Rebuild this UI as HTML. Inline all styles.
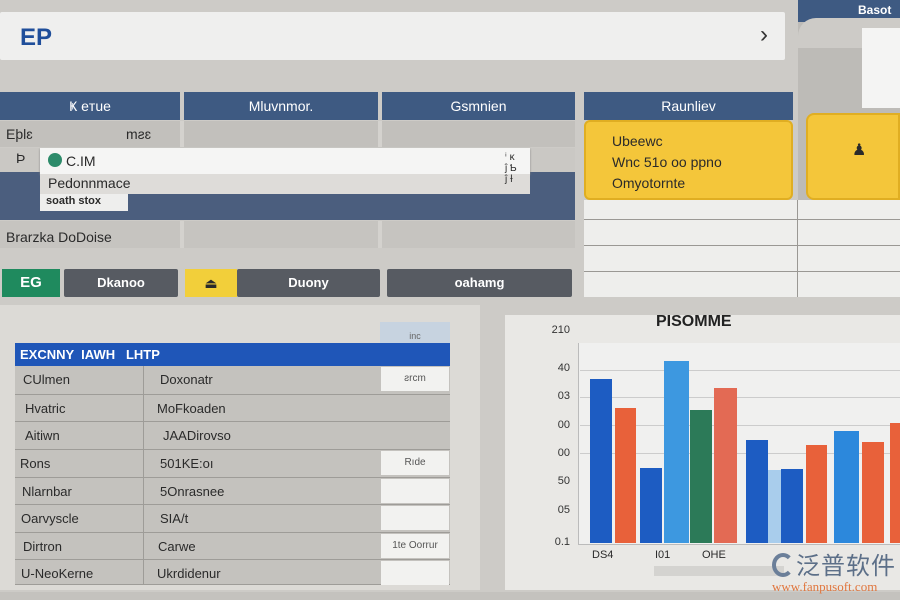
<!DOCTYPE html>
<html><head><meta charset="utf-8"><style>
*{margin:0;padding:0;box-sizing:border-box}
body{width:900px;height:600px;overflow:hidden;background:#cdcbc7;font-family:"Liberation Sans","Noto Sans CJK SC",sans-serif;position:relative;color:#2a2a2a}
div{position:absolute}
.nav{background:#3e5a82;color:#fff;font-size:14px;text-align:center;line-height:28px}
.cell{font-size:14px;color:#2a2a2a}
.btn{background:#575b62;color:#fff;font-size:13px;font-weight:bold;text-align:center;line-height:28px;border-radius:2px}
.r{height:27px;border-top:1px solid #9e9c98;width:435px;left:15px;font-size:13px;line-height:27px}
.r span{position:absolute}
.w{position:absolute;left:366px;width:68px;height:24px;top:1px;background:#f2f2f0;font-size:10px;text-align:center;line-height:24px;color:#555}
.bar{bottom:57px}
.yl{left:540px;font-size:11px;width:30px;text-align:right;color:#333}
</style></head><body>
<div style="left:0;top:592px;width:900px;height:8px;background:#c4c2be"></div>
<!-- top bar -->
<div style="left:0;top:12px;width:785px;height:48px;background:#efefee;border-radius:2px"></div>
<div style="left:20px;top:24px;font-size:24px;font-weight:bold;color:#1f4e9a">EP</div>
<div style="left:760px;top:21px;font-size:24px;color:#333">&rsaquo;</div>
<!-- right top panel -->
<div style="left:798px;top:0;width:102px;height:210px;background:#bdbbb7"></div>
<div style="left:798px;top:0;width:102px;height:22px;background:#3e5a82"></div>
<div style="left:798px;top:18px;width:102px;height:30px;background:#cdcbc7;border-radius:18px 0 0 0"></div>
<div style="left:858px;top:3px;font-size:12px;font-weight:bold;color:#fff">Basot</div>
<div style="left:862px;top:28px;width:38px;height:80px;background:#f4f4f3"></div>
<!-- header row -->
<div class="nav" style="left:0;top:92px;width:180px;height:28px">Ҝ eтue</div>
<div class="nav" style="left:184px;top:92px;width:194px;height:28px">Mluvnmor.</div>
<div class="nav" style="left:382px;top:92px;width:193px;height:28px">Gsmnien</div>
<div class="nav" style="left:584px;top:92px;width:209px;height:28px">Raunliev</div>
<!-- rows -->
<div style="left:0;top:121px;width:575px;height:26px;background:#c2c0bc"></div>
<div style="left:180px;top:121px;width:4px;height:26px;background:#d4d2ce"></div>
<div style="left:378px;top:121px;width:4px;height:26px;background:#d4d2ce"></div>
<div class="cell" style="left:6px;top:126px">Eþlɛ</div>
<div class="cell" style="left:126px;top:126px">mƨɛ</div>
<div style="left:0;top:148px;width:575px;height:24px;background:#cac8c4"></div>
<div class="cell" style="left:16px;top:150px">Þ</div>
<div style="left:0;top:172px;width:575px;height:48px;background:#4b5e7e"></div>
<div style="left:0;top:221px;width:575px;height:27px;background:#c6c4c0"></div>
<div style="left:180px;top:221px;width:4px;height:27px;background:#d4d2ce"></div>
<div style="left:378px;top:221px;width:4px;height:27px;background:#d4d2ce"></div>
<div class="cell" style="left:6px;top:229px;font-size:14px">Brarzka DoDoise</div>
<!-- dropdown -->
<div style="left:40px;top:148px;width:490px;height:26px;background:#f5f5f4;box-shadow:0 1px 2px #888"></div>
<div style="left:48px;top:153px;width:14px;height:14px;border-radius:50%;background:#2d8b6a"></div>
<div class="cell" style="left:66px;top:153px;font-size:14px">C.IM</div>
<div style="left:40px;top:174px;width:490px;height:20px;background:#dedcd9"></div>
<div class="cell" style="left:48px;top:175px;font-size:14px">Pedonnmace</div>
<div style="left:40px;top:194px;width:88px;height:17px;background:#eeeeed"></div>
<div class="cell" style="left:46px;top:195px;font-size:11px;font-weight:bold">soath stox</div>
<div class="cell" style="left:505px;top:152px;font-size:10px">ⁱ ĸ<br>ĵ Ƅ<br>ĵ Ɨ</div>
<!-- yellow cards -->
<div style="left:584px;top:120px;width:209px;height:80px;background:#f4c63a;border-radius:6px;border:2px solid #e0ae22"></div>
<div class="cell" style="left:612px;top:131px;font-size:14px;line-height:21px">Ubeewc<br>Wnc 51o oo ppno<br>Omyotornte</div>
<div style="left:806px;top:113px;width:94px;height:87px;background:#f4c63a;border-radius:8px 0 0 8px;border:2px solid #e0ae22"></div>
<div class="cell" style="left:852px;top:140px;font-size:16px">♟</div>
<!-- right table -->
<div style="left:584px;top:200px;width:316px;height:97px;background:#eeeeec"></div>
<div style="left:584px;top:219px;width:316px;height:1px;background:#9a9894"></div>
<div style="left:584px;top:245px;width:316px;height:1px;background:#9a9894"></div>
<div style="left:584px;top:271px;width:316px;height:1px;background:#9a9894"></div>
<div style="left:797px;top:200px;width:1px;height:97px;background:#9a9894"></div>
<!-- buttons -->
<div style="left:2px;top:269px;width:58px;height:28px;background:#1f8a5e;color:#fff;font-weight:bold;font-size:15px;text-align:center;line-height:28px">EG</div>
<div class="btn" style="left:64px;top:269px;width:114px">Dkanoo</div>
<div style="left:185px;top:269px;width:52px;height:28px;background:#f2cf3a;text-align:center;line-height:28px;font-size:14px">⏏</div>
<div class="btn" style="left:237px;top:269px;width:143px">Duony</div>
<div class="btn" style="left:387px;top:269px;width:185px">oahamg</div>
<!-- lower left panel -->
<div style="left:0;top:305px;width:480px;height:285px;background:#dcdad6"></div>
<div style="left:380px;top:322px;width:70px;height:22px;background:#c7d3e0;font-size:9px;text-align:center;line-height:28px;color:#666">inc</div>
<div style="left:15px;top:343px;width:435px;height:23px;background:#1f56b8;color:#fff;font-weight:bold;font-size:13px;line-height:23px;padding-left:5px">EXCNNY &nbsp;IAWH &nbsp; LHTP</div>
<div style="left:15px;top:366px;width:435px;height:219px;background:#c4c2be;border-bottom:1px solid #9e9c98"></div>
<div style="left:143px;top:366px;width:1px;height:219px;background:#9e9c98"></div>
<div class="r" style="top:366px;border-top:none"><span style="left:8px">CUlmen</span><span style="left:145px">Doxonatr</span><div class="w">ƨrcm</div></div>
<div class="r" style="top:394px"><span style="left:10px">Hvatric</span><span style="left:142px">MoFkoaden</span><div class="w" style="background:#c4c2be"></div></div>
<div class="r" style="top:421px"><span style="left:10px">Aitiwn</span><span style="left:148px">JAADirovso</span><div class="w" style="background:#c4c2be"></div></div>
<div class="r" style="top:449px"><span style="left:5px">Rons</span><span style="left:145px">501KE:oı</span><div class="w">Rıde</div></div>
<div class="r" style="top:477px"><span style="left:7px">Nlarnbar</span><span style="left:145px">5Onrasnee</span><div class="w"></div></div>
<div class="r" style="top:504px"><span style="left:6px">Oarvyscle</span><span style="left:145px">SIA/t</span><div class="w"></div></div>
<div class="r" style="top:532px"><span style="left:8px">Dirtron</span><span style="left:143px">Carwe</span><div class="w">1te Oorrur</div></div>
<div class="r" style="top:559px"><span style="left:6px">U-NeoKerne</span><span style="left:142px">Ukrdidenur</span><div class="w"></div></div>
<!-- chart panel -->
<div style="left:505px;top:315px;width:395px;height:275px;background:#e9e8e5"></div>
<div style="left:656px;top:313px;font-size:16px;font-weight:bold;color:#222">PISOMME</div>
<div style="left:578px;top:343px;width:322px;height:202px;background:#f0f0ef;border-left:1px solid #bbb;border-bottom:1px solid #bbb"></div>
<div style="left:580px;top:370px;width:320px;height:1px;background:#ccc"></div>
<div style="left:580px;top:397px;width:320px;height:1px;background:#ccc"></div>
<div style="left:580px;top:425px;width:320px;height:1px;background:#ccc"></div>
<div style="left:580px;top:453px;width:320px;height:1px;background:#ccc"></div>
<div class="yl" style="top:324px">210</div>
<div class="yl" style="top:362px">40</div>
<div class="yl" style="top:390px">03</div>
<div class="yl" style="top:419px">00</div>
<div class="yl" style="top:447px">00</div>
<div class="yl" style="top:475px">50</div>
<div class="yl" style="top:504px">05</div>
<div class="yl" style="top:536px">0.1</div>
<div class="bar" style="left:590px;width:22px;top:379px;height:164px;background:#1d5cc2"></div>
<div class="bar" style="left:615px;width:21px;top:408px;height:135px;background:#e8613a"></div>
<div class="bar" style="left:640px;width:22px;top:468px;height:75px;background:#1d5cc2"></div>
<div class="bar" style="left:664px;width:25px;top:361px;height:182px;background:#3d98e0"></div>
<div class="bar" style="left:690px;width:22px;top:410px;height:133px;background:#2c7a58"></div>
<div class="bar" style="left:714px;width:23px;top:388px;height:155px;background:#e36a54"></div>
<div class="bar" style="left:746px;width:22px;top:440px;height:103px;background:#1d5cc2"></div>
<div class="bar" style="left:768px;width:13px;top:470px;height:73px;background:#a9cdec"></div>
<div class="bar" style="left:781px;width:22px;top:469px;height:74px;background:#1d5cc2"></div>
<div class="bar" style="left:806px;width:21px;top:445px;height:98px;background:#e8613a"></div>
<div class="bar" style="left:834px;width:25px;top:431px;height:112px;background:#2c88dc"></div>
<div class="bar" style="left:862px;width:22px;top:442px;height:101px;background:#e8613a"></div>
<div class="bar" style="left:890px;width:10px;top:423px;height:120px;background:#e8613a"></div>
<div style="left:592px;top:549px;font-size:11px">DS4</div>
<div style="left:655px;top:549px;font-size:11px">I01</div>
<div style="left:702px;top:549px;font-size:11px">OHE</div>
<div style="left:654px;top:566px;width:130px;height:10px;background:#d4d3d0"></div>
<!-- watermark -->
<div style="left:772px;top:553px;width:22px;height:24px;border-radius:50%;border:4px solid #6b7f99;border-right-color:transparent"></div>
<div style="left:796px;top:550px;font-size:24px;line-height:28px;color:#5c6f88;font-family:'Noto Sans CJK SC',sans-serif;letter-spacing:1px">泛普软件</div>
<div style="left:772px;top:579px;font-size:13px;line-height:15px;color:#e0763e;font-family:'Liberation Serif',serif">www.fanpusoft.com</div>
</body></html>
